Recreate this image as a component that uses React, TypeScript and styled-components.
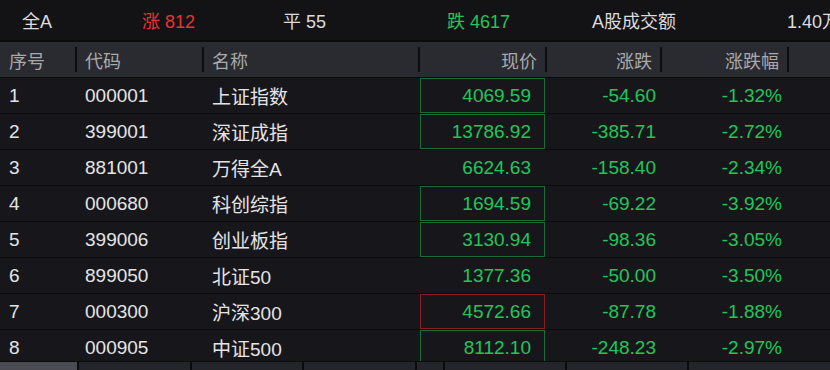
import React from 'react'
import styled, { createGlobalStyle } from 'styled-components'

const GlobalStyle = createGlobalStyle`
  html, body {
    margin: 0;
    padding: 0;
    background: #17171b;
    overflow: hidden;
  }
  body {
    font-family: "Liberation Sans", "Noto Sans CJK SC", sans-serif;
  }
`

const COLS = '76px 127px 216px 127px 115px 127px 1fr'

const GREEN = '#22c55a'
const RED = '#e8322f'

const Page = styled.div`
  width: 830px;
  height: 370px;
  display: flex;
  flex-direction: column;
  overflow: hidden;
  background: #17171b;

  & > * {
    flex: none;
  }
`

const SummaryBar = styled.div`
  height: 40px;
  display: grid;
  grid-template-columns: 120px 141px 164px 145px 195px 1fr;
  align-items: center;
  padding-left: 22px;
  background: #131316;
  border-bottom: 2px solid #0b0b0d;
  font-size: 18px;
  white-space: nowrap;
  overflow: hidden;
`

const SummaryItem = styled.span<{ $tone?: 'up' | 'down' }>`
  color: ${p => (p.$tone === 'up' ? RED : p.$tone === 'down' ? GREEN : '#dcdcde')};
`

const HeaderRow = styled.div`
  height: 35px;
  display: grid;
  grid-template-columns: ${COLS};
  background: #2a2b30;
  border-bottom: 1px solid #0b0b0d;
`

const HeaderCell = styled.div<{ $right?: boolean; $last?: boolean }>`
  display: flex;
  align-items: center;
  justify-content: ${p => (p.$right ? 'flex-end' : 'flex-start')};
  padding: ${p => (p.$right ? '0 9px 0 0' : '0 0 0 9px')};
  color: #a9a9ab;
  font-size: 18px;
  position: relative;

  &::after {
    content: '';
    display: ${p => (p.$last ? 'none' : 'block')};
    position: absolute;
    right: -1px;
    top: 5px;
    bottom: 5px;
    width: 2px;
    background: #0d0d10;
  }
`

const Body = styled.div`
  height: 283px;
  overflow: hidden;
`

const Row = styled.div`
  height: 35px;
  display: grid;
  grid-template-columns: ${COLS};
  background: #17171b;
  border-bottom: 1px solid #0a0a0c;
  font-size: 19px;
`

const TextCell = styled.div`
  display: flex;
  align-items: center;
  padding-left: 9px;
  color: #e4e4e6;
  white-space: nowrap;
`

const NumCell = styled.div<{ $pad: number }>`
  display: flex;
  align-items: center;
  justify-content: flex-end;
  padding-right: ${p => p.$pad}px;
  color: ${GREEN};
`

const PriceCell = styled.div<{ $flash?: 'up' | 'down' }>`
  display: flex;
  align-items: center;
  justify-content: flex-end;
  margin: 0 1px;
  padding-right: 13px;
  color: ${GREEN};
  border: 1px solid
    ${p => (p.$flash === 'down' ? '#1a6b35' : p.$flash === 'up' ? '#8c1d22' : 'transparent')};
`

const TabBar = styled.div`
  height: 30px;
  display: flex;
  background: #24252a;
  border-top: 1px solid #0b0b0d;
`

const Tab = styled.div<{ $w: number; $active?: boolean }>`
  width: ${p => p.$w}px;
  flex: none;
  background: ${p => (p.$active ? '#4b4c53' : '#24252a')};
  border-right: 2px solid #0b0b0d;
`

type Quote = {
  code: string
  name: string
  price: string
  change: string
  pct: string
  flash?: 'up' | 'down'
}

const quotes: Quote[] = [
  { code: '000001', name: '上证指数', price: '4069.59', change: '-54.60', pct: '-1.32%', flash: 'down' },
  { code: '399001', name: '深证成指', price: '13786.92', change: '-385.71', pct: '-2.72%', flash: 'down' },
  { code: '881001', name: '万得全A', price: '6624.63', change: '-158.40', pct: '-2.34%' },
  { code: '000680', name: '科创综指', price: '1694.59', change: '-69.22', pct: '-3.92%', flash: 'down' },
  { code: '399006', name: '创业板指', price: '3130.94', change: '-98.36', pct: '-3.05%', flash: 'down' },
  { code: '899050', name: '北证50', price: '1377.36', change: '-50.00', pct: '-3.50%' },
  { code: '000300', name: '沪深300', price: '4572.66', change: '-87.78', pct: '-1.88%', flash: 'up' },
  { code: '000905', name: '中证500', price: '8112.10', change: '-248.23', pct: '-2.97%', flash: 'down' },
]

const tabs = [77, 111, 110, 111, 26, 120, 120, 155]

export default function App() {
  return (
    <>
      <GlobalStyle />
      <Page>
        <SummaryBar>
          <SummaryItem>全A</SummaryItem>
          <SummaryItem $tone="up">涨 812</SummaryItem>
          <SummaryItem>平 55</SummaryItem>
          <SummaryItem $tone="down">跌 4617</SummaryItem>
          <SummaryItem>A股成交额</SummaryItem>
          <SummaryItem>1.40万亿</SummaryItem>
        </SummaryBar>

        <HeaderRow>
          <HeaderCell>序号</HeaderCell>
          <HeaderCell>代码</HeaderCell>
          <HeaderCell>名称</HeaderCell>
          <HeaderCell $right>现价</HeaderCell>
          <HeaderCell $right>涨跌</HeaderCell>
          <HeaderCell $right>涨跌幅</HeaderCell>
          <HeaderCell $last />
        </HeaderRow>

        <Body>
          {quotes.map((q, i) => (
            <Row key={q.code}>
              <TextCell>{i + 1}</TextCell>
              <TextCell>{q.code}</TextCell>
              <TextCell>{q.name}</TextCell>
              <PriceCell $flash={q.flash}>{q.price}</PriceCell>
              <NumCell $pad={5}>{q.change}</NumCell>
              <NumCell $pad={6}>{q.pct}</NumCell>
              <div />
            </Row>
          ))}
        </Body>

        <TabBar>
          {tabs.map((w, i) => (
            <Tab key={i} $w={w} $active={i === 0} />
          ))}
        </TabBar>
      </Page>
    </>
  )
}
